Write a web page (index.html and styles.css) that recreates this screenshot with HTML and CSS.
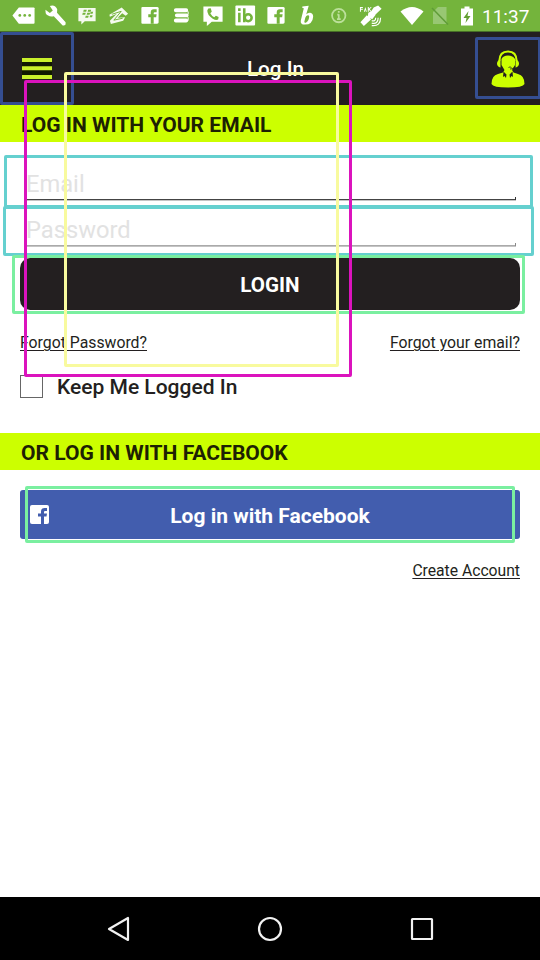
FILE: index.html
```html
<!DOCTYPE html>
<html lang="en">
<head>
<meta charset="utf-8">
<title>Log In</title>
<link rel="stylesheet" href="styles.css">
</head>
<body>
<div class="screen">
  <div class="status">
    <div class="notifications">
      <svg viewBox="0 0 32 32"><path fill="#fff" d="M11 7.500H26Q27 7.500 27 8.500V23Q27 24 26 24H11L4.500 15.700Z"/><g fill="#74b43c"><circle cx="12" cy="15.700" r="1.400"/><circle cx="17" cy="15.700" r="1.400"/><circle cx="22" cy="15.700" r="1.400"/></g></svg>
      <svg viewBox="0 0 32 32"><path fill="#fff" d="M10 6Q15.500 4.500 17.500 9.500L17.300 13L26 22.500V25L24.500 26H23L14 16.500Q8 17.500 5.800 13.500L5.500 10L10 13.200L13 10.700Z"/></svg>
      <svg viewBox="0 0 32 32"><path fill="#f5faef" d="M7.500 8H25V21.500H14L10.500 25V21.500H7.500Z"/><g fill="#74b43c"><path d="M13 10h3l-.6 2h-3zM17.500 10h3l-.6 2h-3zM12 13h3l-.6 2h-3zM16.500 13h3l-.6 2h-3zM20 12h2.500l-.6 2h-2.500zM15 16h3l-.6 2h-3zM19.500 15.500h2.500l-.6 2h-2.500z"/></g></svg>
      <svg viewBox="0 0 32 32"><path fill="#f5faef" d="M6.500 15L19 7.500L25.500 14L23 16L19.500 13.500L15 18L22.500 17.500L20.500 21L8 24.500L7 21L14 14L7 17Z"/><path fill="none" stroke="#74b43c" stroke-width="1" d="M9 14.500L18.500 11.500L11 20.500L20 18.500"/></svg>
      <svg viewBox="0 0 32 32"><path fill="#fff" d="M8.500 7H23.500Q25 7 25 8.500V22.500Q25 24 23.500 24H8.500Q7.500 24 7.500 23V8Q7.500 7 8.500 7Z"/><path fill="#74b43c" d="M17 24V17.500H14.500V14.500H17V12.500Q17 9.500 20 9.500H23V12.500H21Q20 12.500 20 13.500V14.500H23L22.500 17.500H20V24Z"/></svg>
      <svg viewBox="0 0 32 32"><g fill="none" stroke="#fff" stroke-width="4" stroke-linecap="round" stroke-linejoin="round"><path d="M10 10.500H20.500M11 15.600H21M10 20.800H20.500"/></g><path fill="none" stroke="#fff" d="M21 10.500L22.500 12V14.500M21 16L22.500 18V21"/></svg>
      <svg viewBox="0 0 32 32"><path fill="#fff" d="M6.500 6.500H26V22H15L10 26.500V22H6.500Z"/><path fill="#74b43c" d="M11.500 8.700L14 8.500L15 12L13.500 13.500Q15 16.500 17.500 17.500L19.200 16L22 17.300L21.500 19.800Q19.500 21 16 19Q10 15 10.500 10.500Z"/></svg>
      <svg viewBox="0 0 32 32"><rect x="6.500" y="5.500" width="20" height="20.500" rx="1" fill="#fff"/><g fill="none" stroke="#74b43c" stroke-width="2.600"><path d="M10.500 13V22.500M10.500 8.500V11.200M15.500 8.500V22.500"/><circle cx="19.500" cy="18" r="3.500"/></g></svg>
      <svg viewBox="0 0 32 32"><path fill="#fff" d="M8.500 7H23.500Q25 7 25 8.500V22.500Q25 24 23.500 24H8.500Q7.500 24 7.500 23V8Q7.500 7 8.500 7Z"/><path fill="#74b43c" d="M17 24V17.500H14.500V14.500H17V12.500Q17 9.500 20 9.500H23V12.500H21Q20 12.500 20 13.500V14.500H23L22.500 17.500H20V24Z"/></svg>
      <svg viewBox="0 0 32 32"><path fill="#fff" fill-rule="evenodd" d="M10.500 6.500L17 5.800L14.500 14.500Q16 12.800 18.500 13Q21.500 13.500 21.500 17Q21 25 13 25Q8 25 9 20.500L12 8.500L10.500 8ZM13.500 18L12.500 22Q12.500 23.500 14 23Q17 21.500 17.500 17Q17.500 15 16 15.500Q14.200 16 13.500 18Z"/></svg>
      <svg viewBox="0 0 32 32"><g fill="none" stroke="#bce09b" stroke-width="1.800"><circle cx="16" cy="15.800" r="6.800"/><path d="M16 14.500V20M14.500 14.800H16M14.200 19.500H18M16 11.200V13"/></g></svg>
      <svg viewBox="0 0 32 32"><g fill="#fff"><path d="M19 7.500L23.500 5.500L27 9L20 15.500L16.500 11.500ZM13.500 13L17.500 11L21 15L17.500 19.500L13 17ZM5.500 22.500L12 15.500L16.500 19.500L9 26.500Z"/><path d="M5 7h3v1H6v1h2v1H6v2H5zM9 12l1.500-5 1.500 5h-1l-.5-2-.5 2zM13 7h1v2l2-2h1l-2 2.500 2 2.500h-1l-2-2v2h-1z"/></g><path fill="none" stroke="#fff" stroke-width="1.200" d="M17 21Q21 22 21 18M17 23.500Q23.500 25 23.500 18M17 26Q26 27 26 18"/></svg>
    </div>
    <div class="system">
      <svg class="wifi" viewBox="0 0 24 20"><path fill="#fff" d="M.5 5.500Q12-3.500 23.500 5.500L12 19Z"/></svg>
      <svg class="sim" viewBox="0 0 18 20"><path fill="#98c773" d="M7 1H15.500V18H2V6Z"/><path stroke="#5f9c37" stroke-width="1.500" d="M1 2L17 18.500"/></svg>
      <svg class="battery" viewBox="0 0 12 20"><path fill="#fff" d="M3.500 .5H8.500V2.500H12V19.500H0V2.500H3.500Z"/><path fill="#649f32" d="M7.500 5L2.500 12H5.500L4.500 17L9.500 10H6.500Z"/></svg>
      <span class="clock">11:37</span>
    </div>
  </div>

  <header class="toolbar">
    <svg class="menu" viewBox="0 0 30 22"><path fill="#101900" d="M0 4H30V18H0Z"/><path fill="#c9f02b" d="M0 0H30V4H0ZM0 8.300H30V12.300H0ZM0 17H30V21H0Z"/></svg>
    <h1>Log In</h1>
    <svg class="agent" viewBox="0 0 34 38"><path fill="#cf0" d="M.5 34Q.5 25.500 7 24L12 22.500L13.500 20L10.500 15V9Q12 5.500 17 5.500T24 9V15L21 20L22.500 22.500L27 24Q33.500 25.500 33.500 34Q32 37.500 17 37.500T.5 34Z"/><path fill="none" stroke="#cf0" stroke-width="2" d="M8.300 11Q8.500 1.500 17 1.500T25.700 11"/><path fill="#cf0" d="M9.500 9.500V17.500Q6 16.500 6 13.500T9.500 9.500M24.500 9.500V17.500Q28 16.500 28 13.500T24.500 9.500"/><path fill="#231f20" d="M12.500 21.500L15.500 24.500L15 28L13.500 26L12 27ZM21.500 21.500L18.500 24.500L19 28L20.500 26L22 27Z"/><path fill="none" stroke="#231f20" stroke-width=".8" d="M24 16.500Q22.500 19.500 19 19M17.500 17.500Q19 16.300 20.500 17.500"/></svg>
  </header>

  <h2 class="band">LOG IN WITH YOUR EMAIL</h2>
  <main class="form">
    <div class="field email">Email</div>
    <div class="field password">Password</div>
    <div class="login">LOGIN</div>
    <div class="links"><a>Forgot Password?</a><a>Forgot your email?</a></div>
    <div class="keep"><span class="box"></span><span class="label">Keep Me Logged In</span></div>
  </main>
  <h2 class="band">OR LOG IN WITH FACEBOOK</h2>
  <section class="social">
    <div class="facebook">
      <svg viewBox="0 0 19 19"><rect width="19" height="19" rx="2" fill="#fff"/><path fill="#425dae" d="M11 19V11.500H8V8.500H11V6.500Q11 3 14.500 3H17V6H15Q14 6 14 7V8.500H17L16.500 11.500H14V19Z"/></svg>
      <span>Log in with Facebook</span>
    </div>
    <a class="create">Create Account</a>
  </section>

  <nav class="navbar">
    <svg viewBox="0 0 26 26"><path d="M23 2V24L4 13Z"/></svg>
    <svg viewBox="0 0 26 26"><circle cx="13" cy="13" r="11"/></svg>
    <svg viewBox="0 0 26 26"><rect x="3" y="3" width="20" height="20" rx=".5"/></svg>
  </nav>

  <div class="mark mark-menu"></div>
  <div class="mark mark-agent"></div>
  <div class="mark mark-email"></div>
  <div class="mark mark-password"></div>
  <div class="mark mark-login"></div>
  <div class="mark mark-facebook"></div>
  <div class="mark mark-outer"></div>
  <div class="mark mark-inner"></div>
</div>
</body>
</html>
```
FILE: styles.css
```css
* { box-sizing: border-box; }
body { margin: 0; font-family: Roboto, "Liberation Sans", sans-serif; color: #231f20; }
.screen { position: relative; width: 540px; height: 960px; overflow: hidden; display: flex; flex-direction: column; background: #fff; }
svg { display: block; flex: none; }

.status { height: 32px; flex: none; display: flex; background: #74b43c; border-bottom: 1px solid #477026; }
.notifications { display: flex; padding-left: 8px; width: 400px; }
.notifications svg { width: 31.5px; height: 31.5px; }
.system { flex: 1; display: flex; align-items: center; }
.wifi { width: 24px; height: 20px; }
.sim { width: 18px; height: 20px; margin-left: 7px; }
.battery { width: 12px; height: 20px; margin-left: 12px; }
.clock { margin-left: 9px; color: #fff; font-size: 19px; line-height: 31px; padding-top: 2px; white-space: nowrap; }

.toolbar { height: 73px; flex: none; background: #231f20; display: flex; align-items: center; justify-content: space-between; padding: 0 15px 0 22px; }
.menu { width: 30px; height: 22px; margin-top: 1px; }
h1 { margin: 1px 0 0 8px; color: #fff; font-size: 20.7px; font-weight: 500; line-height: 24px; }
.agent { width: 34px; height: 38px; }

.band { margin: 0; height: 37px; flex: none; padding: 1px 21px 0; line-height: 38px; font-size: 21.05px; font-weight: 700; background: #cf0; color: #1d2103; white-space: nowrap; }
.form { height: 291px; flex: none; padding: 13px 20px 0; display: flex; flex-direction: column; }
.field { height: 46px; flex: none; margin: 0 4px; padding: 15px 2px 0; font-size: 23.7px; line-height: 29px; color: #e2e2e2; box-shadow: inset 0 -1px #c4c4c4, inset 0 -2px #aaa; position: relative; }
.field::after { content: ""; position: absolute; right: 0; bottom: 1px; width: 1px; height: 3px; background: #888; }
.email { box-shadow: inset 0 -1px #c4c4c4, inset 0 -2px #444; }
.email::after { background: #333; }
.login { height: 52px; flex: none; margin-top: 11px; border-radius: 10px; background: #231f20; color: #fff; font-size: 20.6px; font-weight: 700; line-height: 55px; text-align: center; }
.links { display: flex; justify-content: space-between; margin-top: 22px; font-size: 15.8px; line-height: 21px; }
a { text-decoration: underline; text-decoration-thickness: 1px; text-underline-offset: 2px; }
.keep { display: flex; align-items: center; height: 23px; margin-top: 22px; font-size: 21px; font-weight: 500; }
.label { margin-top: 1px; }
.box { width: 23px; height: 23px; margin-right: 14px; border: 1px solid #666; }

.social { flex: 1; padding: 20px 20px 0; display: flex; flex-direction: column; }
.facebook { height: 49px; flex: none; display: grid; grid-template-columns: 19px 1fr 19px; align-items: center; padding: 0 10px; border-radius: 3px; background: #425dae; color: #fff; font-size: 21px; font-weight: 700; }
.facebook svg { width: 19px; height: 19px; }
.facebook span { text-align: center; padding-top: 2px; }
.create { align-self: flex-end; margin-top: 22px; font-size: 15.7px; line-height: 20px; }

.navbar { height: 63px; flex: none; background: #000; display: flex; justify-content: space-between; padding: 19px 105px 0; }
.navbar svg { width: 26px; height: 26px; fill: none; stroke: #f2f2f2; stroke-width: 2.2; stroke-linejoin: round; }

.mark { position: absolute; border: 3px solid; border-radius: 2px; }
.mark-menu { left: 0; top: 32px; width: 74px; height: 73px; border-color: #354e91; }
.mark-agent { left: 475px; top: 37px; width: 66px; height: 62px; border-color: #354e91; }
.mark-email { left: 4px; top: 155px; width: 529px; height: 53px; border-color: #65d0cf; }
.mark-password { left: 3px; top: 206px; width: 531px; height: 50px; border-color: #65d0cf; }
.mark-login { left: 12px; top: 255px; width: 513px; height: 59px; border-color: #7aefa0; }
.mark-facebook { left: 25px; top: 486px; width: 490px; height: 57px; border-color: #7aefa0; }
.mark-inner { left: 64px; top: 72px; width: 275px; height: 295px; border-color: #f8fa9e; }
.mark-outer { left: 24px; top: 80px; width: 328px; height: 297px; border-color: #db13bd; }
```
